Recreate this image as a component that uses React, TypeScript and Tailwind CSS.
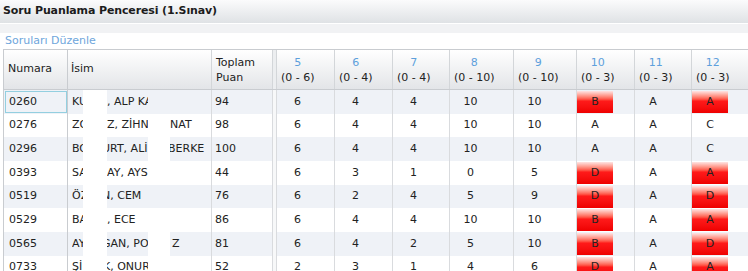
import React from "react";

type Row = {
  no: string;
  a: string;
  b: string;
  bOff?: number;
  c?: string;
  cOff?: number;
  total: number;
  vals: number[];
  grades: string[];
  red: boolean[];
};

const rows: Row[] = [
  { no: "0260", a: "KU", b: ", ALP KA", total: 94, vals: [6, 4, 4, 10, 10], grades: ["B", "A", "A"], red: [true, false, true] },
  { no: "0276", a: "ZO", b: "Z, ZİHN", c: "NAT", cOff: 0, total: 98, vals: [6, 4, 4, 10, 10], grades: ["A", "A", "C"], red: [false, false, false] },
  { no: "0296", a: "BO", b: "URT, ALİ", bOff: -5, c: "BERKE", cOff: -2, total: 100, vals: [6, 4, 4, 10, 10], grades: ["A", "A", "C"], red: [false, false, false] },
  { no: "0393", a: "SA", b: "AY, AYS", total: 44, vals: [6, 3, 1, 0, 5], grades: ["D", "A", "A"], red: [true, false, true] },
  { no: "0519", a: "ÖZ", b: "N, CEM", bOff: -5, total: 76, vals: [6, 2, 4, 5, 9], grades: ["D", "A", "D"], red: [true, false, true] },
  { no: "0529", a: "BA", b: ", ECE", total: 86, vals: [6, 4, 4, 10, 10], grades: ["B", "A", "A"], red: [true, false, true] },
  { no: "0565", a: "AY", b: "GAN, PO", bOff: -5, c: "Z", cOff: 2, total: 81, vals: [6, 4, 2, 5, 10], grades: ["B", "A", "D"], red: [true, false, true] },
  { no: "0733", a: "Şİ", b: "K, ONUR", bOff: -4, total: 52, vals: [2, 3, 1, 4, 6], grades: ["D", "A", "A"], red: [true, false, true] },
];

const questions = [
  { n: "5", r: "(0 - 6)" },
  { n: "6", r: "(0 - 4)" },
  { n: "7", r: "(0 - 4)" },
  { n: "8", r: "(0 - 10)" },
  { n: "9", r: "(0 - 10)" },
  { n: "10", r: "(0 - 3)" },
  { n: "11", r: "(0 - 3)" },
  { n: "12", r: "(0 - 3)" },
];

const grid =
  "grid grid-cols-[65px_144px_61px_4px_58px_58px_57px_64px_63px_58px_57px_60px]";

// name cells are partly blanked out in the source, so each piece is clipped
function Clip({ text, width, off = 0 }: { text: string; width: number; off?: number }) {
  return (
    <span className="block overflow-hidden whitespace-nowrap" style={{ width }}>
      <span className="inline-block" style={{ marginLeft: off }}>
        {text}
      </span>
    </span>
  );
}

export default function App() {
  return (
    <div className="w-[748px] h-[271px] overflow-hidden bg-white font-['DejaVu_Sans',sans-serif] text-[11px] text-[#222]">
      {/* title bar */}
      <div className="h-[23px] flex items-center px-[3px] bg-linear-to-b from-[#fbfbfc] to-[#dfe2e5] font-bold tracking-[-0.12px] text-[#1c1c1c]">
        Soru Puanlama Penceresi (1.Sınav)
      </div>
      <div className="h-[1px] bg-white" />
      <div className="h-[9px] bg-[#f1f2f4]" />
      <div className="h-[16px] flex items-center pl-[5px] text-[#6ea6dc]">Soruları Düzenle</div>

      <div className="pl-[3px]">
        {/* header */}
        <div className={`${grid} h-[41px] border-t border-b border-[#c9ccd0] bg-linear-to-b from-white to-[#e3e5e8]`}>
          <div className="flex items-center pl-[4px] border-l border-r border-[#c9ccd0]">Numara</div>
          <div className="flex items-center pl-[3px] border-r border-[#d3d6d9]">İsim</div>
          <div className="flex flex-col justify-center pl-[4px] leading-[15px] border-r border-[#d3d6d9]">
            <span>Toplam</span>
            <span>Puan</span>
          </div>
          <div className="border-r border-[#d3d6d9] bg-[#eceef0]" />
          {questions.map((q) => (
            <div key={q.n} className="flex items-center pl-[4px] border-r border-[#d3d6d9]">
              <div className="flex flex-col items-center leading-[15px]">
                <span className="text-[#5d9fdc]">{q.n}</span>
                <span>{q.r}</span>
              </div>
            </div>
          ))}
        </div>

        {/* body */}
        {rows.map((r, i) => (
          <div key={r.no} className={`${grid} h-[23.7px] ${i % 2 === 0 ? "bg-[#eff2f7]" : "bg-white"}`}>
            <div className="flex items-center pl-[1px] border-l border-r border-[#c9ccd0]">
              <div
                className={`flex items-center w-[62px] h-[22px] pl-[3px] border ${
                  i === 0 ? "border-[#93cfe0]" : "border-transparent"
                }`}
              >
                {r.no}
              </div>
            </div>
            <div className="flex items-center pl-[4px] border-r border-[#d9dbde]">
              <Clip text={r.a} width={11} />
              <span className="block w-[24px] self-stretch bg-white" />
              <Clip text={r.b} width={41} off={r.bOff} />
              {r.c ? (
                <>
                  <span className="block w-[22px] self-stretch bg-white" />
                  <Clip text={r.c} width={40} off={r.cOff} />
                </>
              ) : null}
            </div>
            <div className="flex items-center pl-[3px] border-r border-[#d9dbde]">{r.total}</div>
            <div className="border-r border-[#d9dbde] bg-[#f7f8f9]" />
            {r.vals.map((v, j) => (
              <div key={j} className="flex items-center border-r border-[#d9dbde]">
                <span className="w-[41px] text-center">{v}</span>
              </div>
            ))}
            {r.grades.map((g, j) => (
              <div key={j} className="flex items-center border-r border-[#d9dbde]">
                <span
                  className={`w-[36px] h-[22px] flex items-center justify-center ${
                    r.red[j] ? "bg-linear-to-b from-[#ffe4e4] via-[#ff1a1a] via-45% to-[#ee0000]" : ""
                  }`}
                >
                  {g}
                </span>
              </div>
            ))}
          </div>
        ))}
      </div>
    </div>
  );
}
